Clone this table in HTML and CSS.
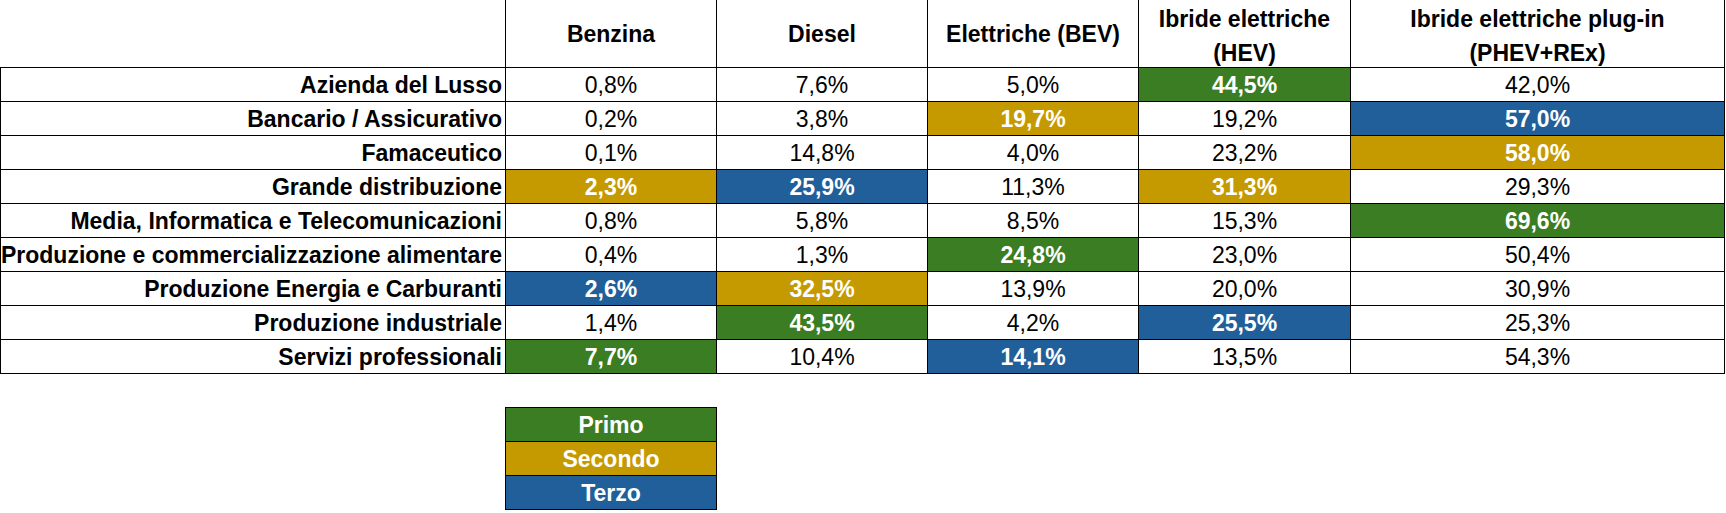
FILE: index.html
```html
<!DOCTYPE html>
<html lang="it">
<head>
<meta charset="utf-8">
<title>Alimentazioni per settore</title>
<link rel="stylesheet" href="styles.css">
</head>
<body>
<main class="sheet">
  <div class="table">
    <div class="cell corner"></div>
    <div class="cell head">Benzina</div>
    <div class="cell head">Diesel</div>
    <div class="cell head">Elettriche (BEV)</div>
    <div class="cell head wrap">Ibride elettriche<br>(HEV)</div>
    <div class="cell head wrap">Ibride elettriche plug-in<br>(PHEV+REx)</div>

    <div class="cell label">Azienda del Lusso</div>
    <div class="cell val">0,8%</div>
    <div class="cell val">7,6%</div>
    <div class="cell val">5,0%</div>
    <div class="cell val first">44,5%</div>
    <div class="cell val">42,0%</div>

    <div class="cell label">Bancario / Assicurativo</div>
    <div class="cell val">0,2%</div>
    <div class="cell val">3,8%</div>
    <div class="cell val second">19,7%</div>
    <div class="cell val">19,2%</div>
    <div class="cell val third">57,0%</div>

    <div class="cell label">Famaceutico</div>
    <div class="cell val">0,1%</div>
    <div class="cell val">14,8%</div>
    <div class="cell val">4,0%</div>
    <div class="cell val">23,2%</div>
    <div class="cell val second">58,0%</div>

    <div class="cell label">Grande distribuzione</div>
    <div class="cell val second">2,3%</div>
    <div class="cell val third">25,9%</div>
    <div class="cell val">11,3%</div>
    <div class="cell val second">31,3%</div>
    <div class="cell val">29,3%</div>

    <div class="cell label">Media, Informatica e Telecomunicazioni</div>
    <div class="cell val">0,8%</div>
    <div class="cell val">5,8%</div>
    <div class="cell val">8,5%</div>
    <div class="cell val">15,3%</div>
    <div class="cell val first">69,6%</div>

    <div class="cell label">Produzione e commercializzazione alimentare</div>
    <div class="cell val">0,4%</div>
    <div class="cell val">1,3%</div>
    <div class="cell val first">24,8%</div>
    <div class="cell val">23,0%</div>
    <div class="cell val">50,4%</div>

    <div class="cell label">Produzione Energia e Carburanti</div>
    <div class="cell val third">2,6%</div>
    <div class="cell val second">32,5%</div>
    <div class="cell val">13,9%</div>
    <div class="cell val">20,0%</div>
    <div class="cell val">30,9%</div>

    <div class="cell label">Produzione industriale</div>
    <div class="cell val">1,4%</div>
    <div class="cell val first">43,5%</div>
    <div class="cell val">4,2%</div>
    <div class="cell val third">25,5%</div>
    <div class="cell val">25,3%</div>

    <div class="cell label">Servizi professionali</div>
    <div class="cell val first">7,7%</div>
    <div class="cell val">10,4%</div>
    <div class="cell val third">14,1%</div>
    <div class="cell val">13,5%</div>
    <div class="cell val">54,3%</div>
  </div>

  <div class="legend">
    <div class="leg first">Primo</div>
    <div class="leg second">Secondo</div>
    <div class="leg third">Terzo</div>
  </div>
</main>
</body>
</html>
```

FILE: styles.css
```css
html, body {
  margin: 0;
  padding: 0;
  background: #ffffff;
}

.sheet {
  font-family: "Liberation Sans", Arial, sans-serif;
  font-size: 23px;
  color: #000000;
}

.table {
  display: grid;
  grid-template-columns: 506px 211px 211px 211px 212px 374px;
  grid-template-rows: 68px repeat(9, 34px);
}

.cell {
  box-sizing: border-box;
  border-right: 1px solid #000;
  border-bottom: 1px solid #000;
  display: flex;
  align-items: center;
  justify-content: center;
  white-space: nowrap;
  line-height: 33px;
  padding-top: 2px;
}

.corner {
  padding: 0;
}

.head {
  font-weight: bold;
  text-align: center;
  line-height: 34px;
  padding-top: 0;
}

.head.wrap {
  padding-top: 4px;
}

.label {
  border-left: 1px solid #000;
  justify-content: flex-end;
  font-weight: bold;
  padding-right: 3px;
}

.val {
  font-weight: normal;
}

.first, .second, .third {
  color: #ffffff;
  font-weight: bold;
}

.first { background: #3b7d23; }
.second { background: #c59a00; }
.third { background: #215f9a; }

.legend {
  margin-top: 33px;
  margin-left: 505px;
  width: 212px;
  box-sizing: border-box;
  border: 1px solid #000;
  border-bottom: none;
  display: flex;
  flex-direction: column;
}

.leg {
  box-sizing: border-box;
  height: 34px;
  border-bottom: 1px solid #000;
  display: flex;
  align-items: center;
  justify-content: center;
  line-height: 33px;
  padding-top: 2px;
}
```
